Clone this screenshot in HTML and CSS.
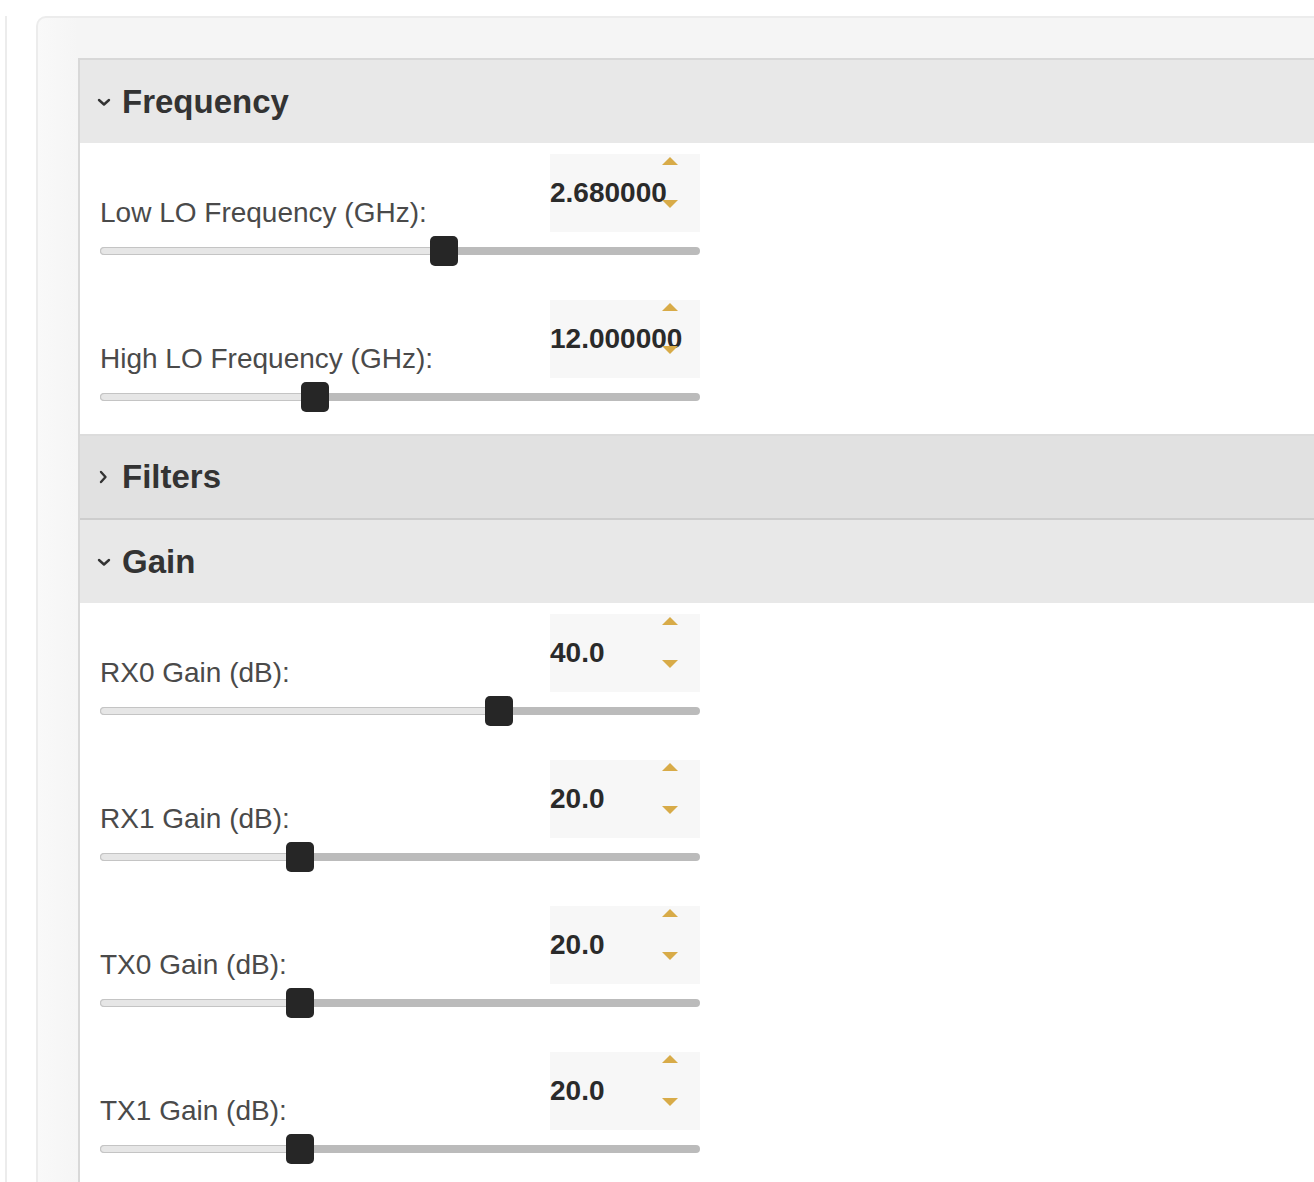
FILE: index.html
```html
<!DOCTYPE html>
<html lang="en">
<head>
  <meta charset="UTF-8">
  <title>Radio Settings</title>
  <link rel="stylesheet" href="styles.css">
</head>
<body>
  <div class="frame">
    <div class="panel">
      <div class="accordion">

        <div class="section">
          <div class="section-header">
            <svg class="chevron" width="14" height="10" viewBox="0 0 14 10"><path d="M2 3l5 4.5L12 3" /></svg>
            <span class="section-title">Frequency</span>
          </div>
          <div class="section-body">
            <div class="control">
              <div class="control-top">
                <label>Low LO Frequency (GHz):</label>
                <div class="spin">
                  <span class="spin-value">2.680000</span>
                  <span class="arrow up"></span>
                  <span class="arrow down"></span>
                </div>
              </div>
              <div class="slider">
                <div class="track"><div class="fill" style="width: 57.4%"></div></div>
                <div class="thumb" style="left: 57.4%"></div>
              </div>
            </div>
            <div class="control">
              <div class="control-top">
                <label>High LO Frequency (GHz):</label>
                <div class="spin">
                  <span class="spin-value">12.000000</span>
                  <span class="arrow up"></span>
                  <span class="arrow down"></span>
                </div>
              </div>
              <div class="slider">
                <div class="track"><div class="fill" style="width: 35.9%"></div></div>
                <div class="thumb" style="left: 35.9%"></div>
              </div>
            </div>
          </div>
        </div>

        <div class="section collapsed">
          <div class="section-header">
            <svg class="chevron" width="14" height="16" viewBox="0 0 14 16"><path d="M4 3l4.5 5L4 13" /></svg>
            <span class="section-title">Filters</span>
          </div>
        </div>

        <div class="section">
          <div class="section-header">
            <svg class="chevron" width="14" height="10" viewBox="0 0 14 10"><path d="M2 3l5 4.5L12 3" /></svg>
            <span class="section-title">Gain</span>
          </div>
          <div class="section-body">
            <div class="control">
              <div class="control-top">
                <label>RX0 Gain (dB):</label>
                <div class="spin">
                  <span class="spin-value">40.0</span>
                  <span class="arrow up"></span>
                  <span class="arrow down"></span>
                </div>
              </div>
              <div class="slider">
                <div class="track"><div class="fill" style="width: 66.5%"></div></div>
                <div class="thumb" style="left: 66.5%"></div>
              </div>
            </div>
            <div class="control">
              <div class="control-top">
                <label>RX1 Gain (dB):</label>
                <div class="spin">
                  <span class="spin-value">20.0</span>
                  <span class="arrow up"></span>
                  <span class="arrow down"></span>
                </div>
              </div>
              <div class="slider">
                <div class="track"><div class="fill" style="width: 33.4%"></div></div>
                <div class="thumb" style="left: 33.4%"></div>
              </div>
            </div>
            <div class="control">
              <div class="control-top">
                <label>TX0 Gain (dB):</label>
                <div class="spin">
                  <span class="spin-value">20.0</span>
                  <span class="arrow up"></span>
                  <span class="arrow down"></span>
                </div>
              </div>
              <div class="slider">
                <div class="track"><div class="fill" style="width: 33.4%"></div></div>
                <div class="thumb" style="left: 33.4%"></div>
              </div>
            </div>
            <div class="control">
              <div class="control-top">
                <label>TX1 Gain (dB):</label>
                <div class="spin">
                  <span class="spin-value">20.0</span>
                  <span class="arrow up"></span>
                  <span class="arrow down"></span>
                </div>
              </div>
              <div class="slider">
                <div class="track"><div class="fill" style="width: 33.4%"></div></div>
                <div class="thumb" style="left: 33.4%"></div>
              </div>
            </div>
          </div>
        </div>

      </div>
    </div>
  </div>
</body>
</html>
```

FILE: styles.css
```css
/* General Styles */
body {
  font-family: "Liberation Sans", Arial, sans-serif;
  background-color: #fff;
  margin: 0;
  padding: 16px 0 0 5px;
  overflow: hidden;
}

.frame {
  border-left: 2px solid #ececec;
  padding-left: 29px;
  min-height: 1200px;
}

.panel {
  background: linear-gradient(to right, #f9f9f9, #f5f5f5 40px);
  border-top: 2px solid #ececec;
  border-left: 2px solid #ececec;
  border-top-left-radius: 10px;
  padding: 40px 0 0 40px;
}

.accordion {
  background-color: #fff;
  border-top: 2px solid #d8d8d8;
  border-left: 2px solid #d8d8d8;
}

/* Section headers */
.section-header {
  height: 83px;
  display: flex;
  align-items: center;
  padding-left: 17px;
  background-color: #e8e8e8;
}

.collapsed .section-header {
  background-color: #e1e1e1;
  border-top: 2px solid #dcdcdc;
  border-bottom: 2px solid #cdcdcd;
  height: 82px;
}

.chevron {
  fill: none;
  stroke: #333;
  stroke-width: 2.4;
  stroke-linecap: round;
  stroke-linejoin: round;
  margin-right: 11px;
}

.section-title {
  font-size: 33px;
  font-weight: bold;
  color: #333;
}

/* Controls */
.section-body {
  padding: 11px 20px 22px;
  display: flex;
  flex-direction: column;
  gap: 34px;
}

.control {
  width: 600px;
}

.control-top {
  display: flex;
  justify-content: space-between;
  align-items: flex-end;
}

label {
  font-size: 28px;
  color: #4a4a4a;
  line-height: 32px;
  padding-bottom: 3px;
}

.spin {
  position: relative;
  width: 150px;
  height: 78px;
  background-color: #f7f7f7;
  display: flex;
  align-items: center;
}

.spin-value {
  font-size: 28px;
  font-weight: bold;
  color: #2a2a2a;
  margin-top: 0;
}

.arrow {
  position: absolute;
  left: 112px;
  width: 0;
  height: 0;
  border-left: 8px solid transparent;
  border-right: 8px solid transparent;
}

.arrow.up {
  top: 3px;
  border-bottom: 8px solid #d8ab48;
}

.arrow.down {
  top: 46px;
  border-top: 8px solid #d8ab48;
}

/* Slider */
.slider {
  position: relative;
  height: 30px;
  margin-top: 4px;
  display: flex;
  align-items: center;
}

.track {
  width: 100%;
  height: 8px;
  border-radius: 4px;
  background-color: #bbb;
  overflow: hidden;
}

.fill {
  height: 100%;
  box-sizing: border-box;
  background-color: #e6e6e6;
  border: 1px solid #c4c4c4;
  border-radius: 4px 0 0 4px;
}

.thumb {
  position: absolute;
  top: 0;
  width: 28px;
  height: 30px;
  margin-left: -14px;
  background-color: #262626;
  border-radius: 5px;
}
```
